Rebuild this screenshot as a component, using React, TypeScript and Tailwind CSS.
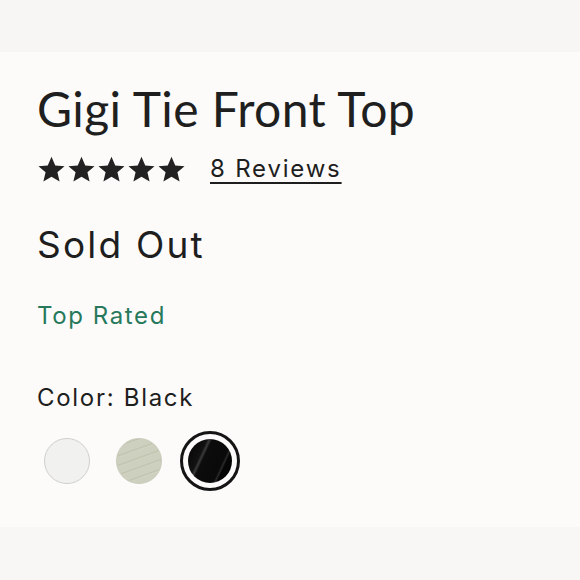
import React from "react";

const STAR = "M12 1.5l3.1 7.2 7.7.6-5.9 5 1.8 7.6L12 17.9l-6.7 4 1.8-7.6-5.9-5 7.7-.6z";

function Stars() {
  return (
    <div className="flex gap-[1px]">
      {[0, 1, 2, 3, 4].map((i) => (
        <svg key={i} width="29" height="29" viewBox="0 0 24 24">
          <path d={STAR} fill="#222" />
        </svg>
      ))}
    </div>
  );
}

const swatches = [
  { name: "White", bg: "bg-[#f1f1f0]", border: "border-[#cfcfcc]" },
  {
    name: "Sage",
    bg: "bg-[repeating-linear-gradient(160deg,#cdd0bf_0px,#cdd0bf_6px,#c0c3ae_7px,#d4d6c6_9px)]",
    border: "border-[#c9cbba]",
  },
];

export default function App() {
  return (
    <div className="w-[580px] h-[580px] bg-[#fcfbf9] flex flex-col font-['Inter',sans-serif] text-[#1e1e1e]">
      <div className="h-[52px] bg-[#f8f6f5]" />
      <div className="flex-1 flex flex-col pl-[37px]">
        <h1 className="mt-[28px] font-['Lato',sans-serif] text-[48px] leading-[58px] tracking-[0.4px] text-[#1f1f1f]">
          Gigi Tie Front Top
        </h1>
        <div className="mt-[13px] flex items-center gap-[24px]">
          <Stars />
          <a className="text-[24px] tracking-[1.8px] underline underline-offset-[5px] decoration-[2px]">
            8 Reviews
          </a>
        </div>
        <div className="mt-[37px] text-[37px] tracking-[2.2px] leading-[42px]">Sold Out</div>
        <div className="mt-[32px] text-[24px] tracking-[1.6px] text-[#27795b]">Top Rated</div>
        <div className="mt-[46px] text-[24px] tracking-[1.7px]">Color: Black</div>
        <div className="mt-[15px] flex items-center gap-[26px] ml-[7px]">
          {swatches.map((s) => (
            <div key={s.name} className={`w-[46px] h-[46px] rounded-full border-[1.5px] ${s.bg} ${s.border}`} />
          ))}
          <div className="w-[60px] h-[60px] -ml-[8px] rounded-full border-[3px] border-[#151515] flex items-center justify-center">
            <div className="w-[44px] h-[44px] rounded-full bg-[linear-gradient(115deg,#050505_0%,#111_30%,#3a3a3a_34%,#0c0c0c_38%,#0a0a0a_70%,#2a2a2a_73%,#050505_76%)]" />
          </div>
        </div>
      </div>
      <div className="h-[53px] bg-[#f9f7f6]" />
    </div>
  );
}
